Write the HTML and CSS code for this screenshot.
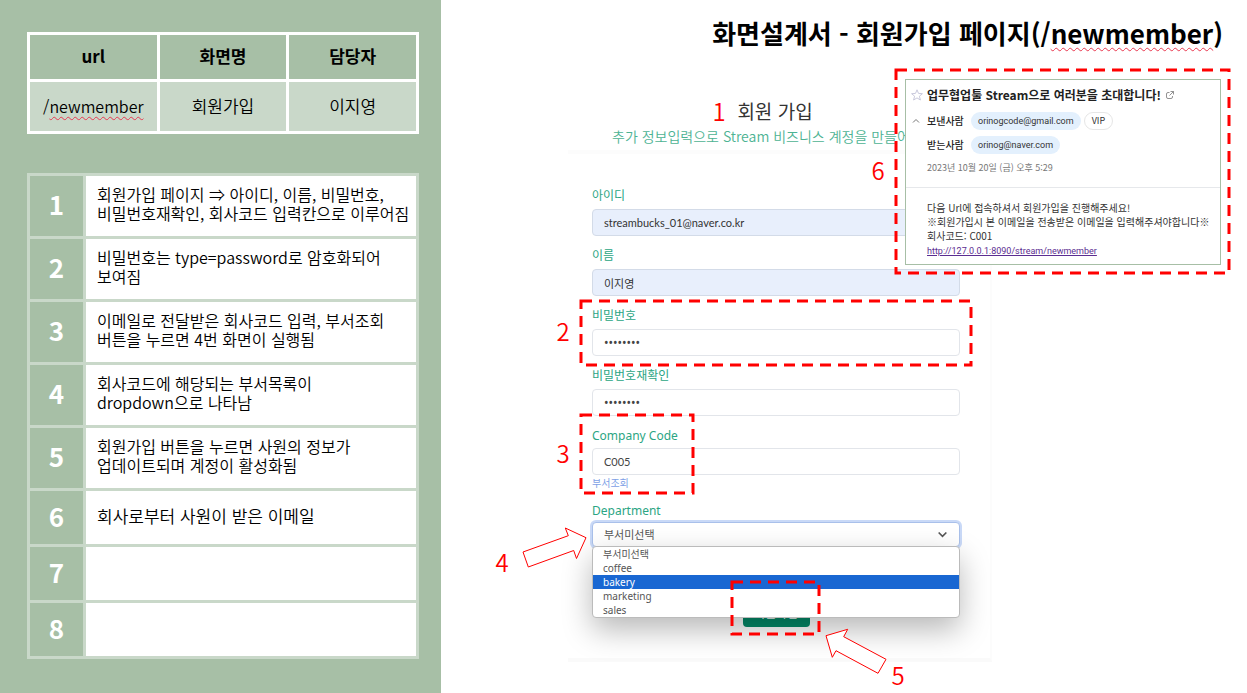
FILE: index.html
```html
<!DOCTYPE html>
<html lang="ko">
<head>
<meta charset="utf-8">
<title>화면설계서 - 회원가입 페이지</title>
<link rel="stylesheet" href="styles.css">
</head>
<body>
<div class="slide">
  <aside class="spec">
    <table class="info">
      <thead><tr><th scope="col">url</th><th scope="col">화면명</th><th scope="col">담당자</th></tr></thead>
      <tbody><tr><td class="path">/<span class="typo">newmember</span></td><td>회원가입</td><td>이지영</td></tr></tbody>
    </table>
    <table class="notes">
      <tbody>
        <tr><th scope="row">1</th><td>회원가입 페이지 ⇒ 아이디, 이름, 비밀번호,<br>비밀번호재확인, 회사코드 입력칸으로 이루어짐</td></tr>
        <tr><th scope="row">2</th><td>비밀번호는 type=password로 암호화되어<br>보여짐</td></tr>
        <tr><th scope="row">3</th><td>이메일로 전달받은 회사코드 입력, 부서조회<br>버튼을 누르면 4번 화면이 실행됨</td></tr>
        <tr><th scope="row">4</th><td>회사코드에 해당되는 부서목록이<br>dropdown으로 나타남</td></tr>
        <tr><th scope="row">5</th><td>회원가입 버튼을 누르면 사원의 정보가<br>업데이트되며 계정이 활성화됨</td></tr>
        <tr class="short"><th scope="row">6</th><td class="large">회사로부터 사원이 받은 이메일</td></tr>
        <tr class="short"><th scope="row">7</th><td></td></tr>
        <tr class="short"><th scope="row">8</th><td></td></tr>
      </tbody>
    </table>
  </aside>

  <main class="board">
    <h1 class="title">화면설계서 - 회원가입 페이지(/<span class="typo">newmember</span>)</h1>

    <section class="signup">
      <header class="signup-head">
        <h2>회원 가입</h2>
        <p>추가 정보입력으로 Stream 비즈니스 계정을 만들어보</p>
      </header>
      <form class="card">
        <div class="field"><label for="uid">아이디</label><input class="filled" id="uid" type="text" value="streambucks_01@naver.co.kr"></div>
        <div class="field"><label for="name">이름</label><input class="filled" id="name" type="text" value="이지영"></div>
        <div class="field"><label for="pw">비밀번호</label><input id="pw" type="password" value="password"></div>
        <div class="field"><label for="pw2">비밀번호재확인</label><input id="pw2" type="password" value="password"></div>
        <div class="field code"><label for="code">Company Code</label><input id="code" type="text" value="C005"><a href="#dept">부서조회</a></div>
        <div class="field dept">
          <label for="dept">Department</label>
          <div class="picker">
            <select id="dept"><option>부서미선택</option></select>
            <svg class="chevron" viewBox="0 0 10 10" aria-hidden="true"><path d="M1.5 3.2 5 6.6 8.5 3.2"/></svg>
            <ul class="options">
              <li>부서미선택</li><li>coffee</li><li class="active">bakery</li><li>marketing</li><li>sales</li>
            </ul>
          </div>
        </div>
        <button class="submit" type="button">회원가입</button>
      </form>
    </section>

    <article class="mail">
      <header class="mail-head">
        <div class="mail-title">
          <svg class="star" viewBox="0 0 12 12" aria-hidden="true"><path d="M6 .8 7.5 4.4 11.4 4.7 8.4 7.2 9.4 11 6 8.9 2.6 11 3.6 7.2.6 4.7 4.5 4.4Z"/></svg>
          <h3>업무협업툴 Stream으로 여러분을 초대합니다!</h3>
          <svg class="popout" viewBox="0 0 10 10" aria-hidden="true"><path d="M4.5 2.5H3A1.5 1.5 0 0 0 1.5 4v3A1.5 1.5 0 0 0 3 8.500H6A1.500 1.500 0 0 0 7.500 7V6M5.500 1.500H8.500V4.500M8.500 1.500 4.500 5.500"/></svg>
        </div>
        <div class="mail-row">
          <svg class="fold" viewBox="0 0 10 10" aria-hidden="true"><path d="M2 6.500 5 3.500 8 6.500"/></svg>
          <b>보낸사람</b><span class="pill">orinogcode@gmail.com</span><span class="vip">VIP</span>
        </div>
        <div class="mail-row"><span class="fold"></span><b>받는사람</b><span class="pill">orinog@naver.com</span></div>
        <time>2023년 10월 20일 (금) 오후 5:29</time>
      </header>
      <div class="mail-body">
        <p>다음 Url에 접속하셔서 회원가입을 진행해주세요!</p>
        <p>※회원가입시 본 이메일을 전송받은 이메일을 입력해주셔야합니다※</p>
        <p>회사코드: C001</p>
        <p><a href="#newmember">http://127.0.0.1:8090/stream/newmember</a></p>
      </div>
    </article>

    <svg class="marks" width="806" height="693" viewBox="441 0 806 693">
      <g class="dash">
        <path d="M896 70H1229V273H896Z"/>
        <path d="M581 301H971V365H581Z"/>
        <path d="M581 415H693V493H581Z"/>
        <path d="M732 582H819V634H732Z"/>
      </g>
      <g class="arrow">
        <path d="M523 552 568.300 535.700 565.300 528 586 537.700 576.500 558.500 573.700 550.500 528.300 567Z"/>
        <path d="M826 635.700 847.700 629.300 843.700 636.700 886 659.300 878 673.300 836 650.700 832.300 657.300Z"/>
      </g>
      <g class="num">
        <text x="719" y="121">1</text>
        <text x="563" y="341">2</text>
        <text x="563" y="463">3</text>
        <text x="502" y="572">4</text>
        <text x="898" y="685">5</text>
        <text x="878" y="180">6</text>
      </g>
    </svg>
  </main>
</div>
</body>
</html>
```
FILE: styles.css
```css
* { box-sizing: border-box; }
body, h1, h2, h3, p, ul { margin: 0; padding: 0; }
body {
  font-family: "Noto Sans CJK KR", sans-serif;
  color: #000;
  background: #fff;
}
.slide { display: flex; min-height: 100vh; }
.typo { text-decoration: underline wavy #e8384f 1px; text-underline-offset: 3px; }

/* left specification panel */
.spec {
  flex: 0 0 441px;
  padding: 32px 22px 32px 27px;
  background: #a7bfa6;
}
table { width: 100%; border-collapse: collapse; table-layout: fixed; }
.info { margin-bottom: 39px; }
.info th, .info td { border: 3px solid #fff; padding: 0 0 2px; text-align: center; line-height: 24px; }
.info th { height: 47px; font-size: 17px; font-weight: 700; }
.info td { height: 52px; font-size: 17px; font-weight: 350; background: #c9d8c9; }
.info td.path { font-size: 16px; }
.notes th, .notes td { border: 3px solid #c9d8c9; height: 63px; }
.notes th { width: 56px; padding: 0 0 4px; font-size: 26px; line-height: 32px; font-weight: 700; color: #fff; }
.notes td { padding: 0 0 4px 11px; font-size: 16px; line-height: 19px; font-weight: 350; background: #fff; white-space: nowrap; }
.notes td.large { font-size: 17px; }
.notes .short th, .notes .short td { height: 56px; }

/* right board */
.board { position: relative; flex: 1; padding: 13px 24px 0 127px; }
.title { text-align: right; font-size: 26px; line-height: 40px; font-weight: 700; white-space: nowrap; }

.signup { max-width: 424px; margin-top: 45px; }
.signup-head { height: 56px; border-bottom: 4px solid #fcfcfc; }
.signup-head h2 { font-size: 19px; line-height: 26px; font-weight: 400; color: #333; padding-right: 10px; text-align: center; }
.signup-head p { padding-left: 44px; font-size: 14px; line-height: 25px; font-weight: 350; color: #4db393; white-space: nowrap; }
.card {
  padding: 33px 30px 31px 24px;
  border-right: 2px solid #fcfcfc;
  border-bottom: 4px solid #fafafa;
  font-family: "Noto Sans", "Noto Sans CJK KR", sans-serif;
}
.field { display: flex; flex-direction: column; margin-bottom: 10px; }
.field label { font-size: 12px; line-height: 18px; margin-bottom: 4px; padding-top: 1px; color: #2ba583; }
.field:first-child label { padding-top: 0; }
.field input, .field select {
  width: 100%;
  height: 27px;
  padding: 0 11px;
  border: 1px solid #e2e5ea;
  border-radius: 4px;
  background: #fff;
  font: 400 11px/18px Lato, "Noto Sans CJK KR", sans-serif;
  color: #444;
}
.field input.filled { background: #e8effc; border-color: #d3dbe8; color: #333; }
.field input[type="password"] { font-family: "Noto Sans", sans-serif; font-size: 12px; }
.code label { margin-bottom: 3px; }
.code a { font-size: 10px; line-height: 16px; color: #7d9fe6; text-decoration: none; }
.dept { margin-bottom: 52px; }
.dept label { margin-bottom: 2px; }
.picker { position: relative; }
.picker select {
  display: block;
  height: 25px;
  border-color: #a9c0ea;
  appearance: none;
  box-shadow: 0 0 0 2px #c9d9f7;
  color: #555;
}
.chevron { position: absolute; right: 12px; top: 7px; width: 11px; height: 11px; fill: none; stroke: #555; stroke-width: 1.500; }
.options {
  position: absolute;
  left: 0;
  right: 0;
  top: 24px;
  list-style: none;
  background: #fff;
  border: 1px solid #bbb;
  border-radius: 4px;
  box-shadow: 0 12px 30px rgba(0, 0, 0, .28);
  font-size: 10px;
  line-height: 14px;
  color: #555;
}
.options li { padding: 0 10px; }
.options .active { background: #1967d2; color: #fff; }
.submit {
  display: block;
  margin: 0 auto;
  width: 67px;
  height: 28px;
  border: 0;
  border-radius: 4px;
  background: #048a68;
  color: #fff;
  font: 400 12px/18px "Noto Sans CJK KR", sans-serif;
}

/* invitation mail placed over the form */
.mail {
  position: absolute;
  top: 79px;
  right: 26px;
  width: 316px;
  height: 186px;
  border: 1px solid #a7bfa6;
  background: #fff;
  color: #333;
  white-space: nowrap;
}
.mail-head { padding: 5px 5px 10px; border-bottom: 1px solid #e6e8eb; }
.mail-title { display: flex; align-items: center; height: 20px; margin-bottom: 4px; }
.mail-title h3 { font-size: 12px; line-height: 20px; font-weight: 700; color: #222; }
.star { width: 12px; height: 12px; margin-right: 4px; fill: none; stroke: #c9c9dc; }
.popout { width: 10px; height: 10px; margin-left: 4px; fill: none; stroke: #777; stroke-width: .8; }
.mail-row { display: flex; align-items: center; height: 24px; font-size: 9px; line-height: 18px; }
.mail-row b { width: 44px; font-size: 10px; font-weight: 500; color: #222; }
.fold { width: 10px; height: 10px; margin-right: 6px; fill: none; stroke: #777; }
.pill, .vip { border-radius: 9px; padding: 0 7px; height: 18px; }
.pill { background: #e3f0fd; font-family: Roboto, sans-serif; }
.vip { margin-left: 3px; border: 1px solid #e6e6e6; line-height: 16px; }
.mail time { display: block; margin-left: 16px; font-size: 9px; line-height: 18px; color: #777; padding-top: 2px; }
.mail-body { padding: 13px 0 0 21px; font-size: 10px; line-height: 14px; }
.mail-body a { font-family: Roboto, sans-serif; font-size: 9px; color: #5b2d91; }

/* red annotations */
.marks { position: absolute; left: 0; top: 0; pointer-events: none; }
.dash { fill: none; stroke: #f00; stroke-width: 3; stroke-dasharray: 11 7; }
.arrow { fill: #fff; stroke: #f00; stroke-width: 1; }
.num { fill: #f00; font-size: 24px; font-weight: 350; text-anchor: middle; }
```
